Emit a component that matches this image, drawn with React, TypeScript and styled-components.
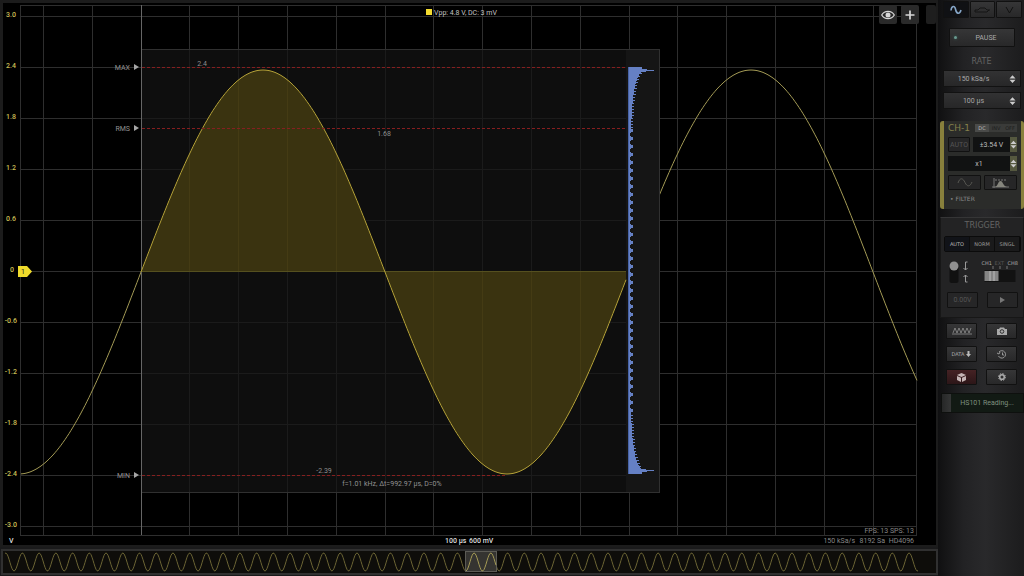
import React from "react";
import styled, { createGlobalStyle } from "styled-components";

const Global = createGlobalStyle`
  * { box-sizing: border-box; }
  body { margin: 0; background: #141415; color: #9a9a9a; font-family: Roboto, "Liberation Sans", sans-serif; font-size: 7px; }
  button, select, input { font-family: inherit; font-size: inherit; color: inherit; margin: 0; }
`;

const Page = styled.div`
  display: grid;
  grid-template-columns: minmax(0, 1fr) 86px;
  min-height: 100vh;
  background: #1a1a1b;
`;
const Main = styled.main`
  display: flex;
  flex-direction: column;
  min-width: 0;
`;
const Scope = styled.section`
  position: relative;
  flex: 1;
  min-height: 0;
  background: #000;
  border: 3px solid #1c1c1c;
  border-width: 3px 2px 2px 3px;
`;
const Chart = styled.svg`
  display: block;
  width: 100%;
  font-family: Roboto, "Liberation Sans", sans-serif;
  font-size: 7px;
`;
const ChartTools = styled.div`
  position: absolute;
  top: 2px;
  right: 0;
  display: flex;
  gap: 4px;
`;
const Tool = styled.button<{ $narrow?: boolean }>`
  width: ${(p) => (p.$narrow ? 10 : 18)}px;
  height: 19px;
  padding: 0;
  margin-left: ${(p) => (p.$narrow ? 3 : 0)}px;
  display: grid;
  place-items: center;
  border: 0;
  border-radius: 2px;
  background: ${(p) => (p.$narrow ? "#1e1e1e" : "#2a2a2a")};
  color: #d8d8d8;
`;
const Overview = styled.section`
  height: 26px;
  margin: 2px 0 2px 1px;
  border: 2px solid #303030;
  background: #0e0d0a;
`;

const Side = styled.aside`
  display: flex;
  flex-direction: column;
  padding: 1px 2px 0 3px;
  background: linear-gradient(90deg, #101011, #222224 30%, #29292b 55%, #1c1c1d);
`;
const Tabs = styled.div`
  display: grid;
  grid-template-columns: repeat(3, 1fr);
  gap: 1px;
  margin-left: 2px;
  height: 17px;
`;
const Btn = styled.button<{ $tone?: "plain" | "dark" | "red" | "off" }>`
  display: flex;
  align-items: center;
  justify-content: center;
  gap: 2px;
  min-width: 0;
  padding: 0;
  border: 1px solid #111;
  border-radius: 1px;
  background: ${(p) =>
    p.$tone === "dark" ? "#101114"
    : p.$tone === "red" ? "linear-gradient(#452224, #2c1618)"
    : p.$tone === "off" ? "#262627"
    : "linear-gradient(#363637, #282829)"};
  color: ${(p) => (p.$tone === "off" ? "#555" : "#aaa")};
  overflow: hidden;
`;
const Pause = styled(Btn)`
  position: relative;
  height: 19px;
  margin: 10px 7px 0 8px;
  padding-left: 8px;
`;
const Led = styled.span`
  position: absolute;
  left: 4px;
  width: 3px;
  height: 3px;
  border-radius: 50%;
  background: #6a9a90;
  box-shadow: 0 0 3px #37665c;
`;
const Heading = styled.h2<{ $gap: number }>`
  margin: ${(p) => p.$gap}px 0 0;
  height: 10px;
  font: 400 8px/10px "DejaVu Sans", sans-serif;
  text-align: center;
  color: #636363;
`;
const Picker = styled.label<{ $gap: number }>`
  display: grid;
  grid-template-columns: 1fr 16px;
  gap: 1px;
  height: 17px;
  margin: ${(p) => p.$gap}px 1px 0 2px;
  border: 1px solid #121212;
  background: linear-gradient(#323233, #272728);
  align-items: center;
  color: #a8a8a8;
`;
const Select = styled.select`
  appearance: none;
  border: 0;
  background: transparent;
  width: 100%;
  height: 100%;
  padding: 0;
  text-align: center;
  text-align-last: center;
`;
const Arrows = styled.svg`
  display: block;
  justify-self: center;
`;

const Channel = styled.section`
  margin: 12px -2px 0 -1px;
  padding: 1px 4px 0 4px;
  height: 88px;
  border: 4px solid #88803c;
  border-width: 0 3px 0 4px;
  border-radius: 3px;
  background: #2b2c2a;
  display: flex;
  flex-direction: column;
  gap: 4px;
`;
const ChannelHead = styled.div`
  display: grid;
  grid-template-columns: 1fr 14px 14px 14px;
  align-items: center;
  height: 11px;
`;
const ChannelName = styled.h2`
  margin: 0;
  color: #85804a;
  font: 400 9px/10px "DejaVu Sans", sans-serif;
`;
const Mini = styled.button<{ $on?: boolean }>`
  height: 8px;
  padding: 0;
  border: 0;
  background: ${(p) => (p.$on ? "#4a4b49" : "#3a3b39")};
  color: ${(p) => (p.$on ? "#bbb" : "#1c1c1c")};
  font: 5px/8px "DejaVu Sans", sans-serif;
`;
const Row = styled.div<{ $cols: string }>`
  display: grid;
  grid-template-columns: ${(p) => p.$cols};
  gap: 3px;
  height: 15px;
`;
const Value = styled.label`
  display: grid;
  grid-template-columns: 1fr 7px;
  align-items: center;
  background: #111212;
  color: #bdbdbd;
  svg { background: #55583f; height: 100%; }
`;
const Filter = styled.button`
  align-self: flex-start;
  padding: 0 2px;
  border: 0;
  background: none;
  color: #888;
  font: 6px/10px "DejaVu Sans", sans-serif;
`;

const Trigger = styled.section`
  margin: 8px -2px 0 -1px;
  padding: 0 2px 0 3px;
  height: 101px;
  border: 1px solid #171717;
  border-top-color: #353536;
  background: #232324;
  display: flex;
  flex-direction: column;
`;
const Modes = styled.div`
  display: grid;
  grid-template-columns: repeat(3, minmax(0, 1fr));
  height: 16px;
  margin-top: 5px;
  border: 1px solid #0b0b0b;
  border-radius: 2px;
  background: #1a1a1b;
  font: 5px/12px "DejaVu Sans", sans-serif;
  button { border: 0; border-right: 1px solid #0c0c0c; padding: 0; font: inherit; background: none; }
  button:first-child { background: #111318; color: #bbb; }
`;
const Switches = styled.svg`
  display: block;
  margin-top: 8px;
  width: 100%;
  height: 28px;
  font: 5px "DejaVu Sans", sans-serif;
`;
const Pad = styled.div<{ $gap: number }>`
  display: grid;
  grid-template-columns: 31px 31px;
  justify-content: center;
  column-gap: 9px;
  row-gap: 7px;
  grid-auto-rows: 16px;
  margin-top: ${(p) => p.$gap}px;
`;
const Status = styled.output`
  display: grid;
  grid-template-columns: 9px 1fr;
  height: 20px;
  margin: 8px -2px 0 0;
  background: #121a14;
  border: 1px solid #0e100e;
  line-height: 18px;
  text-align: center;
  color: #7f917f;
`;
const Grip = styled.span`
  background: linear-gradient(90deg, #262727, #353636);
`;
const Small = styled.span`
  font: 5px "DejaVu Sans", sans-serif;
`;

const AREA = { start: 20, end: 917, top: 5, bottom: 535 };
const wave = (x: number) => 272 - 202 * Math.sin(((x - 141) / 488) * 2 * Math.PI);
const trace = (from: number, to: number) => {
  const pts: string[] = [];
  for (let x = from; x < to; x += 2) pts.push(`${x},${wave(x).toFixed(1)}`);
  pts.push(`${to},${wave(to).toFixed(1)}`);
  return pts.join(" ");
};
const columns = Array.from({ length: 18 }, (_, i) => Math.round(43 + i * 48.8) + 0.5);
const levels = [3, 2.4, 1.8, 1.2, 0.6, 0, -0.6, -1.2, -1.8, -2.4, -3];
const levelY = (v: number) => Math.round(271 - v * 84.9) + 0.5;

// Sample histogram: tall at both extremes of the sine, separate blobs in between.
const bins = Array.from({ length: 407 }, (_, i) => {
  const y = 67 + i;
  const d = Math.min(i, 406 - i);
  const blob = [3, 5, 5, 5, 3, 2, 2, 2][y % 8];
  const comb = 3 + 36 / (d + 3) + 8 * Math.exp(-d / 22) + (i % 3 === 0 ? 1 : -1);
  let w = d > 60 ? blob : comb;
  if (d < 2) w = 14;
  else if (d === 2) w = 19;
  else if (d === 3) w = 26;
  else if (d === 4) w = 18;
  return { y, w: Math.round(w) };
});

const miniWave = (from: number, to: number) => {
  const pts: string[] = [];
  for (let x = from; x <= to; x += 1) pts.push(`${x},${(11 - 9 * Math.cos(((x - 22.4) / 16.73) * 2 * Math.PI + Math.PI * 2)).toFixed(1)}`);
  return pts.join(" ");
};

const markers = [
  { name: "MAX", y: 67, end: 626, label: "2.4", x: 202, ly: 66 },
  { name: "RMS", y: 128, end: 626, label: "1.68", x: 384, ly: 136 },
  { name: "MIN", y: 475, end: 505, label: "-2.39", x: 324, ly: 473 },
];

const Spin = () => (
  <Arrows width="7" height="8" viewBox="0 0 7 8" aria-hidden="true">
    <path d="M.5 3.400 3.500.2 6.500 3.400zM.5 4.700h6L3.500 7.900z" fill="#ccc" />
  </Arrows>
);

function Plot() {
  return (
    <Chart viewBox="3 3 933 542" role="img" aria-label="Channel 1 waveform">
      <g stroke="#2e2e2e">
        {columns.map((x) => <line key={x} x1={x} x2={x} y1={AREA.top} y2={AREA.bottom} />)}
        {levels.map((v) => <line key={v} x1={AREA.start} x2={AREA.end} y1={levelY(v)} y2={levelY(v)} />)}
        <rect x="20.5" y="5.5" width="896" height="530" fill="none" />
      </g>
      <polyline points={trace(21, 917)} fill="none" stroke="#a39a55" />
      <rect x="141.5" y="49.5" width="518" height="443" fill="#0e0e0e" stroke="#303030" />
      <g stroke="#1b1b1b">
        {columns.filter((x) => x > 142 && x < 620).map((x) => <line key={x} x1={x} x2={x} y1="50" y2="492" />)}
        {levels.slice(1, 10).map((v) => <line key={v} x1="142" x2="626" y1={levelY(v)} y2={levelY(v)} />)}
      </g>
      <rect x="626" y="50" width="33" height="442" fill="#151515" />
      <line x1="141.5" x2="141.5" y1="5" y2="535" stroke="#666" />
      <polygon points={`141,271 ${trace(141, 626)} 626,271`} fill="#3a3310" />
      <g stroke="#55491c" opacity="0.4">
        {columns.filter((x) => x > 150 && x < 620).map((x) => <line key={x} x1={x} x2={x} y1={Math.min(271, wave(x))} y2={Math.max(271, wave(x))} />)}
      </g>
      <line x1="141" x2="626" y1="271.5" y2="271.5" stroke="#55501f" />
      <polyline points={trace(141, 626)} fill="none" stroke="#b5a238" />
      {markers.map((m) => (
        <g key={m.name}>
          <path d={`M142 ${m.y + 0.5}H${m.end}`} stroke="#861f1f" strokeDasharray="3 2" />
          <text x="130" y={m.y + 3} textAnchor="end" fill="#929292">{m.name}</text>
          <path d={`M134 ${m.y - 3}l5 3-5 3z`} fill="#a5a5a5" />
          <text x={m.x} y={m.ly} textAnchor="middle" fill="#8d8d8d">{m.label}</text>
        </g>
      ))}
      <g fill="#6580c4">
        <rect x="628" y="67" width="2" height="407" fill="#4763a6" />
        {bins.map((b) => <rect key={b.y} x="629" y={b.y} width={b.w - 1} height="1" />)}
      </g>
      <g fill="#cbbf55" textAnchor="end" fontWeight="500">
        {levels.map((v) => <text key={v} x={v < 0 ? 17 : v === 0 ? 14 : 16} y={levelY(v) + 0.5}>{v === 0 ? "0" : v.toFixed(1)}</text>)}
      </g>
      <path d="M18 266h9l5 5.500-5 5.500h-9z" fill="#f0dc2c" />
      <text x="23" y="274" textAnchor="middle" fill="#222">1</text>
      <rect x="426" y="9" width="6" height="6" fill="#f4dc30" />
      <text x="434" y="15" fill="#c4c4c4">Vpp: 4.8 V, DC: 3 mV</text>
      <text x="392" y="486" textAnchor="middle" fill="#929292">f=1.01 kHz, Δt=992.97 µs, D=0%</text>
      <text x="9" y="543" fill="#ddd" fontWeight="500">V</text>
      <text x="445" y="543" fill="#ddd" fontWeight="500">100 µs</text>
      <text x="469" y="543" fill="#ddd" fontWeight="500">600 mV</text>
      <g fill="#868686" textAnchor="end">
        <text x="914" y="533">FPS: 13 SPS: 13</text>
        <text x="855" y="543">150 kSa/s</text>
        <text x="885" y="543">8192 Sa</text>
        <text x="914" y="543">HD4096</text>
      </g>
    </Chart>
  );
}

export default function App() {
  return (
    <Page>
      <Global />
      <Main>
        <Scope>
          <Plot />
          <ChartTools>
            <Tool aria-label="Show measurements">
              <svg width="14" height="10" viewBox="0 0 14 10"><path d="M.7 5C3.600.2 10.400.2 13.300 5 10.400 9.800 3.600 9.800.7 5z" fill="none" stroke="currentColor" strokeWidth="1.2" /><circle cx="7" cy="5" r="2.5" fill="currentColor" /></svg>
            </Tool>
            <Tool aria-label="Add">
              <svg width="10" height="10" viewBox="0 0 10 10"><path d="M5 .5v9M.5 5h9" stroke="currentColor" strokeWidth="1.7" /></svg>
            </Tool>
            <Tool $narrow aria-label="Expand" />
          </ChartTools>
        </Scope>
        <Overview>
          <svg width="100%" height="22" viewBox="3 0 933 22" role="img" aria-label="Signal overview">
            <polyline points={miniWave(5, 918)} fill="none" stroke="#6b6434" />
            <rect x="465.5" y="0.5" width="31" height="20" fill="#353431" stroke="#5c5b55" />
            <polyline points={miniWave(466, 496)} fill="none" stroke="#a49a55" />
          </svg>
        </Overview>
      </Main>
      <Side>
        <Tabs>
          <Btn $tone="dark" aria-label="Oscilloscope"><svg width="12" height="10" viewBox="0 0 12 10"><path d="M1 5.500C1.500.5 4.800.3 5.600 4.500S9.500 10 11 5" fill="none" stroke="#86a6c8" strokeWidth="1.6" /></svg></Btn>
          <Btn aria-label="Logic"><svg width="17" height="8" viewBox="0 0 17 8"><path d="M1 6V4h3l2-2h5l2 2h3M1 6h12l2-2" fill="none" stroke="#151515" /></svg></Btn>
          <Btn aria-label="Voltmeter"><svg width="9" height="8" viewBox="0 0 9 8"><path d="M1 1l3.500 6L8 1" fill="none" stroke="#111" /></svg></Btn>
        </Tabs>
        <Pause><Led />PAUSE</Pause>
        <Heading $gap={10}>RATE</Heading>
        <Picker $gap={3}><Select aria-label="Sample rate"><option>150 kSa/s</option></Select><Spin /></Picker>
        <Picker $gap={5}><Select aria-label="Time base"><option>100 µs</option></Select><Spin /></Picker>
        <Channel>
          <ChannelHead><ChannelName>CH-1</ChannelName><Mini $on>DC</Mini><Mini>INV</Mini><Mini>OFF</Mini></ChannelHead>
          <Row $cols="22px 1fr"><Btn $tone="off">AUTO</Btn><Value><Select aria-label="Voltage range"><option>±3.54 V</option></Select><Spin /></Value></Row>
          <Row $cols="1fr"><Value><Select aria-label="Probe factor"><option>x1</option></Select><Spin /></Value></Row>
          <Row $cols="1fr 1fr">
            <Btn $tone="off" aria-label="Smooth"><svg width="16" height="9" viewBox="0 0 16 9"><path d="M1 5C3-1 6 0 8 4.500S13 9 15 4" fill="none" stroke="#575752" /></svg></Btn>
            <Btn $tone="off" aria-label="Measure"><svg width="17" height="10" viewBox="0 0 17 10"><path d="M2 0v10M0 9h17" stroke="#777" /><path d="M3 2h12" stroke="#777" strokeDasharray="2 1" /><path d="M3 9C6 8 6 3 8.500 3S11 8 15 9z" fill="#85857d" /></svg></Btn>
          </Row>
          <Filter>• FILTER</Filter>
        </Channel>
        <Trigger>
          <Heading $gap={3}>TRIGGER</Heading>
          <Modes><button>AUTO</button><button>NORM</button><button>SINGL</button></Modes>
          <Switches viewBox="0 0 76 28" aria-hidden="true">
            <rect x="5" y="3" width="9" height="20" rx="2" fill="#111" /><circle cx="9.5" cy="6" r="4.500" fill="#909090" />
            <path d="M23 2h-2v8m-2-2 2 2 2-2M23 22h-2v-7m-2 2 2-2 2 2" fill="none" stroke="#999" />
            <text x="37" y="5" fill="#aaa">CH1</text><text x="50" y="5" fill="#555">EXT</text><text x="63" y="5" fill="#aaa">CH8</text>
            <path d="M48.5 6v3M55.5 6v3M62.5 6v3" stroke="#777" />
            <rect x="40" y="10" width="31" height="12" fill="#121212" /><rect x="40" y="11" width="14" height="10" fill="#858585" /><path d="M45.5 11v10M49.5 11v10" stroke="#bbb" />
          </Switches>
          <Pad $gap={4}><Btn $tone="off">0.00V</Btn><Btn $tone="off" aria-label="Run"><svg width="7" height="8"><path d="M1 1l5 3-5 3z" fill="#777" /></svg></Btn></Pad>
        </Trigger>
        <Pad $gap={5}>
          <Btn aria-label="Signal generator"><svg width="20" height="8" viewBox="0 0 20 8"><path d="M0 7h20M1 6l2-5 2 5 2-5 2 5 2-5 2 5 2-5 2 5 2-5" fill="none" stroke="#929292" strokeWidth=".8" /></svg></Btn>
          <Btn aria-label="Snapshot"><svg width="10" height="8"><path d="M0 2h2l1-1.500h4L8 2h2v6H0z" fill="#aaa" /><circle cx="5" cy="4.5" r="1.800" fill="#aaa" stroke="#333" /></svg></Btn>
          <Btn><Small>DATA</Small><svg width="5" height="7"><path d="M1.500 0h2v3H5L2.500 6 0 3h1.500z" fill="#bbb" /></svg></Btn>
          <Btn aria-label="History"><svg width="10" height="9" viewBox="0 0 10 9"><path d="M2 2a3.700 3.700 0 1 1-.5 4M0 3l2 1 1-2M5.500 2.500V5H7" fill="none" stroke="#999" /></svg></Btn>
          <Btn $tone="red" aria-label="Device"><svg width="9" height="9"><path d="M4.500 0 9 2 4.500 4 0 2zM0 3l4 1.800V9L0 7zM9 3 5 4.800V9l4-2z" fill="#c5b5b5" /></svg></Btn>
          <Btn aria-label="Settings"><svg width="8" height="8"><circle cx="4" cy="4" r="2.300" fill="none" stroke="#aaa" strokeWidth="1.600" /><circle cx="4" cy="4" r="3.500" fill="none" stroke="#aaa" strokeDasharray="1.400 1.350" /></svg></Btn>
        </Pad>
        <Status><Grip />HS101 Reading...</Status>
      </Side>
    </Page>
  );
}
